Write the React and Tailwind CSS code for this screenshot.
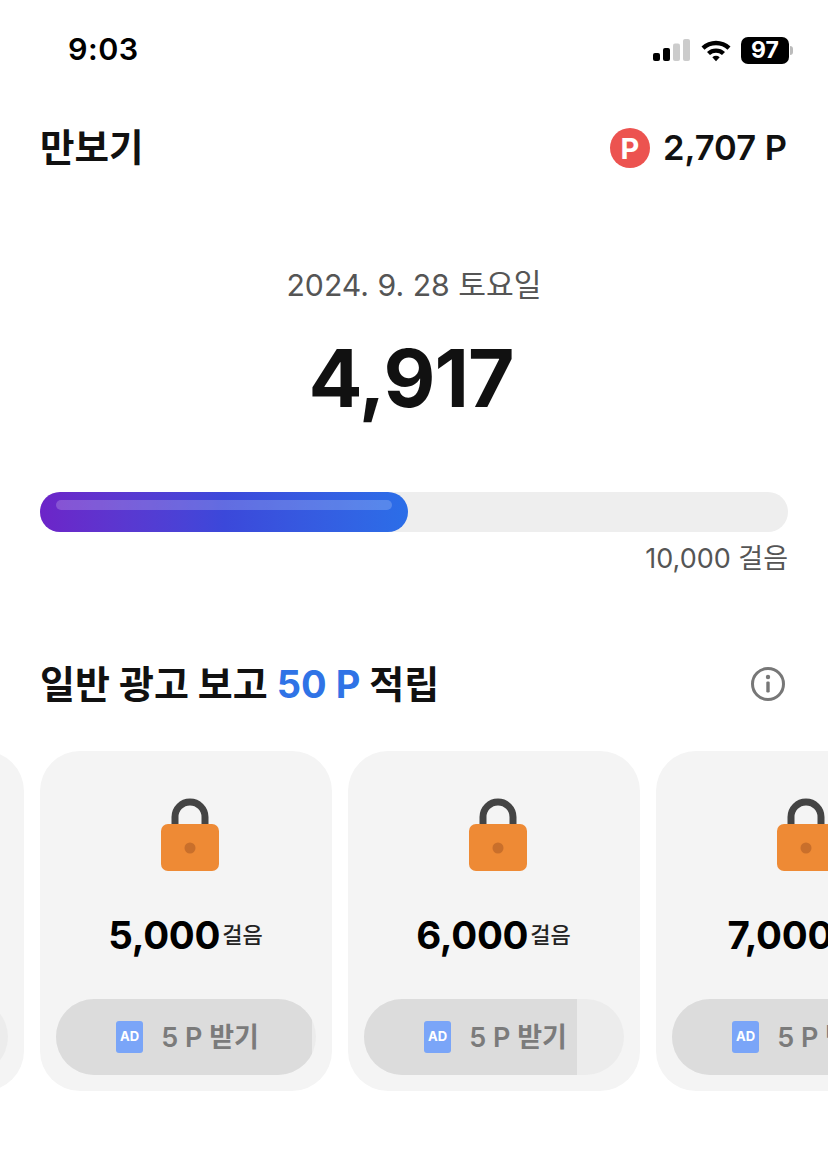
import React from 'react';

const FONT = "font-['Inter','Noto_Sans_CJK_KR',sans-serif]";

const StatusBar = () => (
    <div className="flex justify-between items-center h-[100px] pl-[68px] pr-[35px]">
        <span className="text-[30.5px] font-semibold text-black leading-none tracking-[0.5px] mb-[2px]">9:03</span>
        <div className="flex items-center">
            <svg width="38" height="24" viewBox="0 0 38 24" className="mr-[9px]">
                <rect x="0" y="15" width="7" height="8" rx="2" fill="#000" />
                <rect x="10" y="10" width="7" height="13" rx="2" fill="#000" />
                <rect x="20" y="5.5" width="7" height="17.5" rx="2" fill="#ccc" />
                <rect x="30" y="1" width="7" height="22" rx="2" fill="#ccc" />
            </svg>
            <svg width="32" height="24" viewBox="0 0 32 24" className="mr-[9px]">
                <path d="M1.5 8.5 A21 21 0 0 1 30.5 8.5 L27.5 11.7 A17 17 0 0 0 4.5 11.7 Z" fill="#000" />
                <path d="M7 14 A13.5 13.5 0 0 1 25 14 L22 17 A9.5 9.5 0 0 0 10 17 Z" fill="#000" />
                <path d="M12.3 19.3 A6 6 0 0 1 19.7 19.3 L16 23.3 Z" fill="#000" />
            </svg>
            <div className="flex items-center justify-center w-[48px] h-[27px] bg-black rounded-[7px] text-white text-[23px] font-bold leading-none">97</div>
            <div className="w-[3px] h-[9px] bg-[#bbb] rounded-r-[3px] ml-[1px]"></div>
        </div>
    </div>
);

const Lock = () => (
    <svg width="58" height="73" viewBox="0 0 58 73" className="block ml-[8px]">
        <path d="M14 30 V19 A15 15 0 0 1 44 19 V30" fill="none" stroke="#444444" strokeWidth="7" />
        <rect x="0" y="26" width="58" height="47" rx="7" fill="#EE8A35" />
        <circle cx="29" cy="50" r="5.5" fill="#C96F2B" />
    </svg>
);

const Card = ({ steps, fill }) => (
    <div className="flex flex-col items-center shrink-0 w-[292px] h-[340px] bg-[#f4f4f4] rounded-[40px] px-[16px] pt-[47px]">
        <Lock />
        <div className="flex items-center justify-center mt-[39px] h-[50px] pr-[1px]">
            <span className="text-[38.5px] font-bold text-black leading-[50px] tracking-[-0.3px]">{steps}</span>
            <span className="text-[22px] font-medium text-[#222] ml-[2px] leading-[50px]">걸음</span>
        </div>
        <div className="relative w-[260px] h-[76px] mt-[39px] rounded-full overflow-hidden bg-[#ececec] shrink-0">
            <div className={`absolute left-0 top-0 bottom-0 bg-[#dcdcdc] ${fill}`}></div>
            <div className="relative flex items-center justify-center h-full pl-[3px]">
                <div className="flex items-center justify-center w-[27px] h-[32px] bg-[#7aa5f8] rounded-[3px] text-white text-[13px] font-bold">AD</div>
                <span className="ml-[18px] text-[27px] font-semibold text-[#7b7b7b] leading-none">5 P 받기</span>
            </div>
        </div>
    </div>
);

const App = () => {
    return (
        <div className={`w-[828px] h-[1166px] bg-white overflow-hidden ${FONT}`}>
            <StatusBar />

            <div className="flex justify-between items-center h-[96px] px-[40px]">
                <h1 className="text-[37.5px] font-bold text-[#111] leading-none">만보기</h1>
                <div className="flex items-center">
                    <div className="flex items-center justify-center w-[40px] h-[40px] rounded-full bg-[#ec5350] text-white text-[29px] font-bold leading-none">P</div>
                    <span className="ml-[13px] mr-[1px] text-[34.5px] font-semibold text-[#111] leading-none">2,707 P</span>
                </div>
            </div>

            <div className="flex flex-col items-center">
                <div className="mt-[64px] text-[30.2px] text-[#555] leading-[50px]">2024. 9. 28 토요일</div>
                <div className="mt-[18px] mr-[6px] text-[80px] font-bold text-[#111] leading-[100px] tracking-[-1px]">4,917</div>
            </div>

            <div className="mx-[40px] mt-[64px] h-[40px] rounded-full bg-[#eeeeee]">
                <div className="w-[368px] h-[40px] rounded-full p-[8px_16px] bg-gradient-to-r from-[#6c24c8] via-[#3b48da] to-[#2b6ee8]">
                    <div className="h-[10px] rounded-full bg-white/20"></div>
                </div>
            </div>
            <div className="mx-[40px] mt-[8px] text-right text-[27px] text-[#555] leading-[38px]">10,000 걸음</div>

            <div className="flex justify-between items-center mx-[40px] mt-[76px] h-[60px]">
                <h2 className="text-[38px] font-bold text-[#111] leading-none">
                    일반 광고 보고 <span className="text-[#2f73e6]">50 P</span> 적립
                </h2>
                <svg width="38" height="38" viewBox="0 0 38 38" className="mr-[1px]">
                    <circle cx="19" cy="19" r="15.5" fill="none" stroke="#777" strokeWidth="3" />
                    <circle cx="19" cy="12" r="2.2" fill="#777" />
                    <rect x="17.3" y="16.5" width="3.4" height="11" rx="1.2" fill="#777" />
                </svg>
            </div>

            <div className="flex gap-[16px] ml-[-268px] mt-[37px]">
                <Card steps="4,000" fill="w-0" />
                <Card steps="5,000" fill="w-[256px]" />
                <Card steps="6,000" fill="w-[213px]" />
                <Card steps="7,000" fill="w-[260px]" />
            </div>
        </div>
    );
};

export default App;
